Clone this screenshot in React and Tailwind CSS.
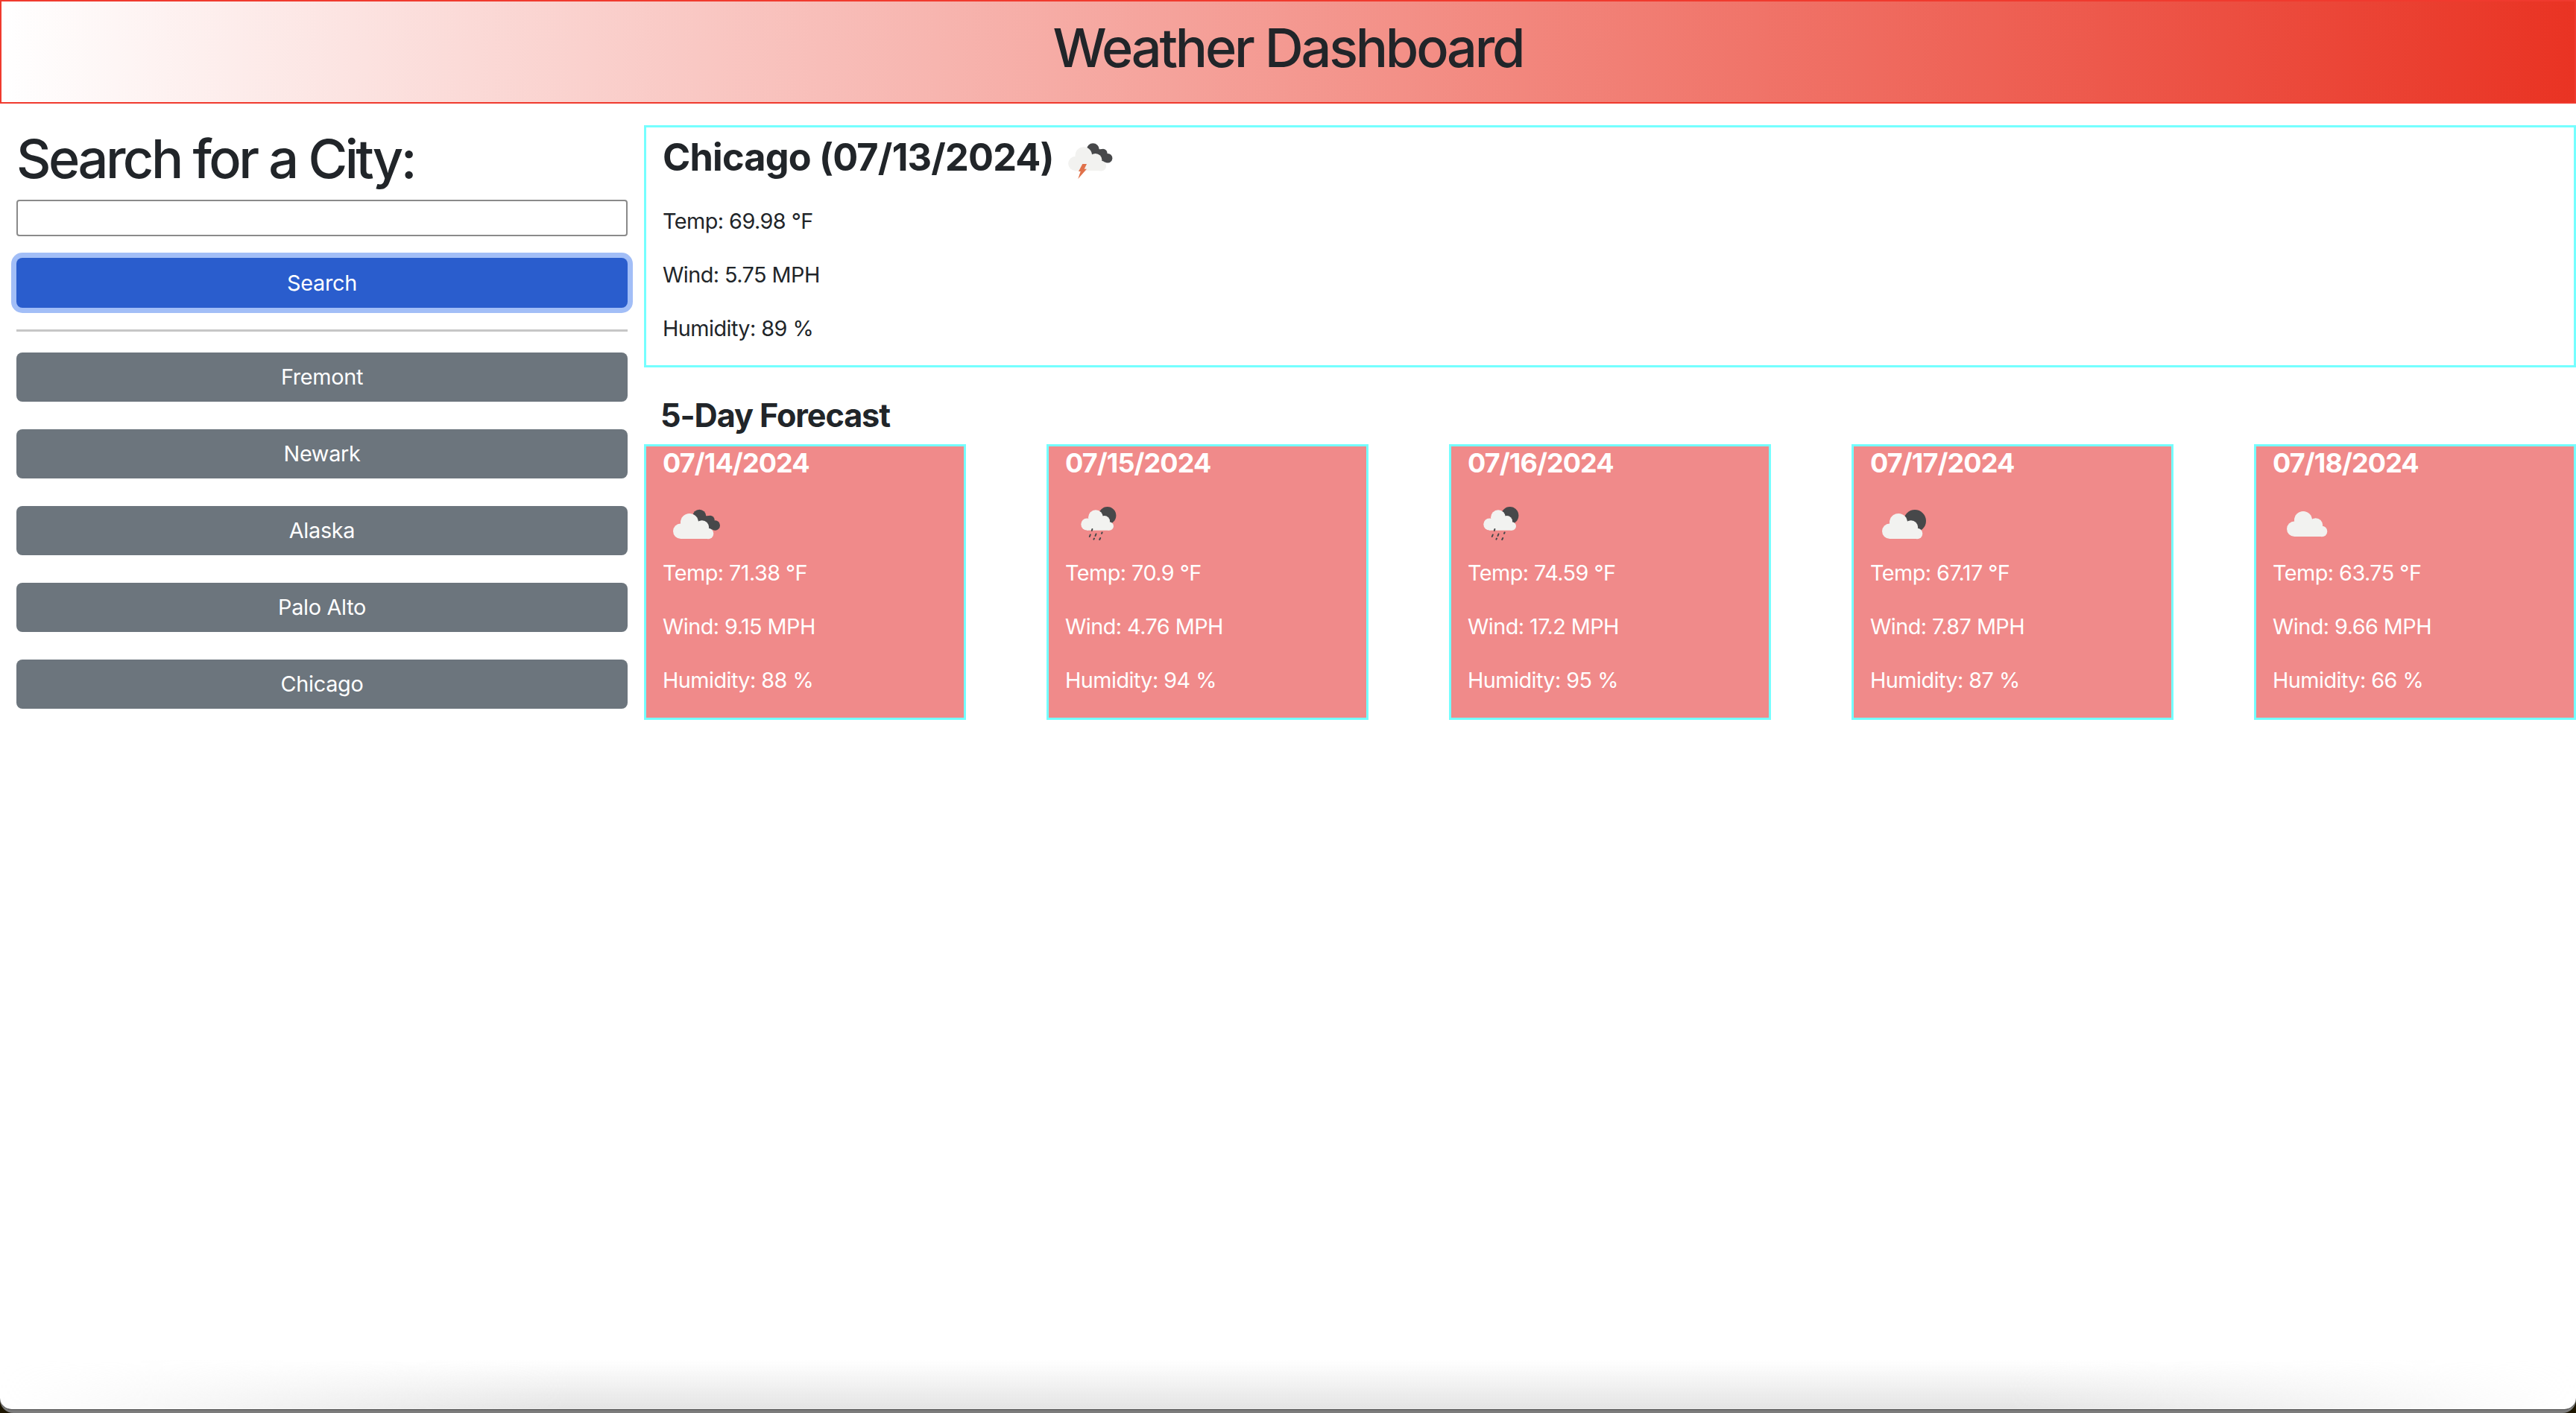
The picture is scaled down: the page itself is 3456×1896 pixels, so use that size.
import React from 'react';

const history = ['Fremont', 'Newark', 'Alaska', 'Palo Alto', 'Chicago'];

const forecast = [
  { date: '07/14/2024', icon: 'dark-clouds', temp: '71.38', wind: '9.15', humidity: '88' },
  { date: '07/15/2024', icon: 'rain', temp: '70.9', wind: '4.76', humidity: '94' },
  { date: '07/16/2024', icon: 'rain', temp: '74.59', wind: '17.2', humidity: '95' },
  { date: '07/17/2024', icon: 'moon', temp: '67.17', wind: '7.87', humidity: '87' },
  { date: '07/18/2024', icon: 'cloud', temp: '63.75', wind: '9.66', humidity: '66' },
];

const Cloud = () => (
  <g fill="#f2f2f0">
    <circle cx="24.3" cy="69.7" r="10.3" />
    <circle cx="36" cy="58" r="12" />
    <circle cx="52.7" cy="64.7" r="9.5" />
    <circle cx="61" cy="73" r="7.3" />
    <rect x="24" y="62" width="37" height="18" />
  </g>
);

const DarkCloud = () => (
  <g fill="#47484a">
    <circle cx="49.3" cy="49.7" r="9" />
    <circle cx="63.7" cy="54.7" r="6" />
    <circle cx="70.3" cy="62" r="6.7" />
    <polygon points="44,50 64,49 72,60 66,68 50,66" />
  </g>
);

const RainIcon = () => (
  <>
    <circle cx="56.7" cy="48.7" r="11.7" fill="#47484a" />
    <g fill="#f2f2f0">
      <circle cx="29.3" cy="60.5" r="8" />
      <circle cx="41" cy="51.3" r="10" />
      <circle cx="52.7" cy="56.3" r="7.3" />
      <circle cx="59.3" cy="63" r="5.7" />
      <rect x="29" y="56" width="30" height="12.7" />
    </g>
    <g stroke="#47484a" strokeWidth="2" strokeLinecap="round">
      <line x1="36.4" y1="67" x2="35.8" y2="69" />
      <line x1="33.8" y1="74.5" x2="32.8" y2="77" />
      <line x1="41.5" y1="73.5" x2="40.5" y2="76" />
      <line x1="49.6" y1="71.5" x2="49" y2="72.8" />
      <line x1="39" y1="79.6" x2="38.4" y2="80.6" />
      <line x1="47.2" y1="79" x2="46.2" y2="81" />
    </g>
  </>
);

const WeatherIcon = ({ type }) => (
  <svg viewBox="0 0 100 104" className="block w-[100px] h-[104px]">
    {type === 'dark-clouds' && (
      <>
        <DarkCloud />
        <Cloud />
      </>
    )}
    {type === 'rain' && <RainIcon />}
    {type === 'moon' && (
      <>
        <circle cx="60" cy="56" r="15" fill="#47484a" />
        <g transform="translate(2 0)">
          <Cloud />
        </g>
      </>
    )}
    {type === 'cloud' && (
      <g transform="translate(5 -3)">
        <Cloud />
      </g>
    )}
  </svg>
);

const StormIcon = () => (
  <svg viewBox="0 0 80 56" className="block w-[80px] h-[56px] ml-[6px] mt-[9px] shrink-0">
    <g transform="translate(0 -36) scale(0.94)">
      <DarkCloud />
      <Cloud />
    </g>
    <polygon points="32.3,30 38,30 34.7,36.7 38,36.7 26.3,50 29.7,40 27,40" fill="#e0714a" />
  </svg>
);

const Stat = ({ children }) => (
  <p className="text-[28.8px] leading-[43.2px] tracking-[-0.55px] mb-[28.8px]">{children}</p>
);

const App = () => {
  return (
    <div className="h-[1896px] overflow-hidden bg-[#1c1500] font-['Inter',sans-serif] text-[#212529]">
      <div className="h-full bg-[#7c7c7c] rounded-b-[18px]">
        <div className="relative h-[1892px] bg-white rounded-b-[16px] border-b border-[#444] overflow-hidden">
          <header className="h-[139px] border-2 border-[#f03a2e] bg-[linear-gradient(to_right,#ffffff,#e93323)] flex justify-center pt-[19px]">
            <h1 className="text-[72px] leading-[86px] font-medium tracking-[-3.2px]">Weather Dashboard</h1>
          </header>

          <main className="flex mt-[29px]">
            <aside className="w-[864px] shrink-0 px-[22px]">
              <h2 className="text-[72px] leading-[86px] font-medium tracking-[-3.5px] mt-[2px]">Search for a City:</h2>
              <input
                type="text"
                className="block w-full h-[49px] mt-[12px] border-2 border-[#8a8a8a] rounded-[4px] bg-white"
              />
              <button className="block w-full h-[67px] mt-[29px] bg-[#2a5dcd] text-white text-[28.8px] tracking-[-0.3px] rounded-[8px] ring-[7px] ring-[#a2bef7]">
                Search
              </button>
              <hr className="mt-[29px] mb-[28px] border-0 h-[3px] bg-[#c6c6c6]" />
              <div className="flex flex-col gap-[37px]">
                {history.map((city) => (
                  <button
                    key={city}
                    className="h-[66px] bg-[#6c757d] text-white text-[28.8px] tracking-[-0.3px] rounded-[8px]"
                  >
                    {city}
                  </button>
                ))}
              </div>
            </aside>

            <section className="flex-1 min-w-0">
              <div className="h-[325px] border-[3px] border-[#75ffff] px-[22px] pt-[10px]">
                <div className="flex items-start">
                  <h3 className="text-[50.4px] leading-[60.5px] font-bold tracking-[-0.8px]">Chicago (07/13/2024)</h3>
                  <StormIcon />
                </div>
                <div className="mt-[29px]">
                  <Stat>Temp: 69.98 °F</Stat>
                  <Stat>Wind: 5.75 MPH</Stat>
                  <Stat>Humidity: 89 %</Stat>
                </div>
              </div>

              <h4 className="text-[43.2px] leading-[52px] font-bold tracking-[-1.1px] mt-[38px] mb-[13px] pl-[22px]">5-Day Forecast</h4>

              <div className="flex justify-between">
                {forecast.map((day) => (
                  <div
                    key={day.date}
                    className="w-[432px] h-[370px] border-[3px] border-[#75ffff] bg-[#f08a8a] text-white px-[22px] pt-[1px]"
                  >
                    <h5 className="text-[36px] leading-[43.2px] font-bold tracking-[-0.9px]">{day.date}</h5>
                    <WeatherIcon type={day.icon} />
                    <Stat>Temp: {day.temp} °F</Stat>
                    <Stat>Wind: {day.wind} MPH</Stat>
                    <Stat>Humidity: {day.humidity} %</Stat>
                  </div>
                ))}
              </div>
            </section>
          </main>

          {/* window shadow along the bottom edge of the capture */}
          <div className="absolute inset-x-0 bottom-0 h-[66px] bg-gradient-to-t from-[#e4e4e4] to-transparent [mask-image:linear-gradient(to_right,transparent,black_22%,black_78%,transparent)]" />
        </div>
      </div>
    </div>
  );
};

export default App;
